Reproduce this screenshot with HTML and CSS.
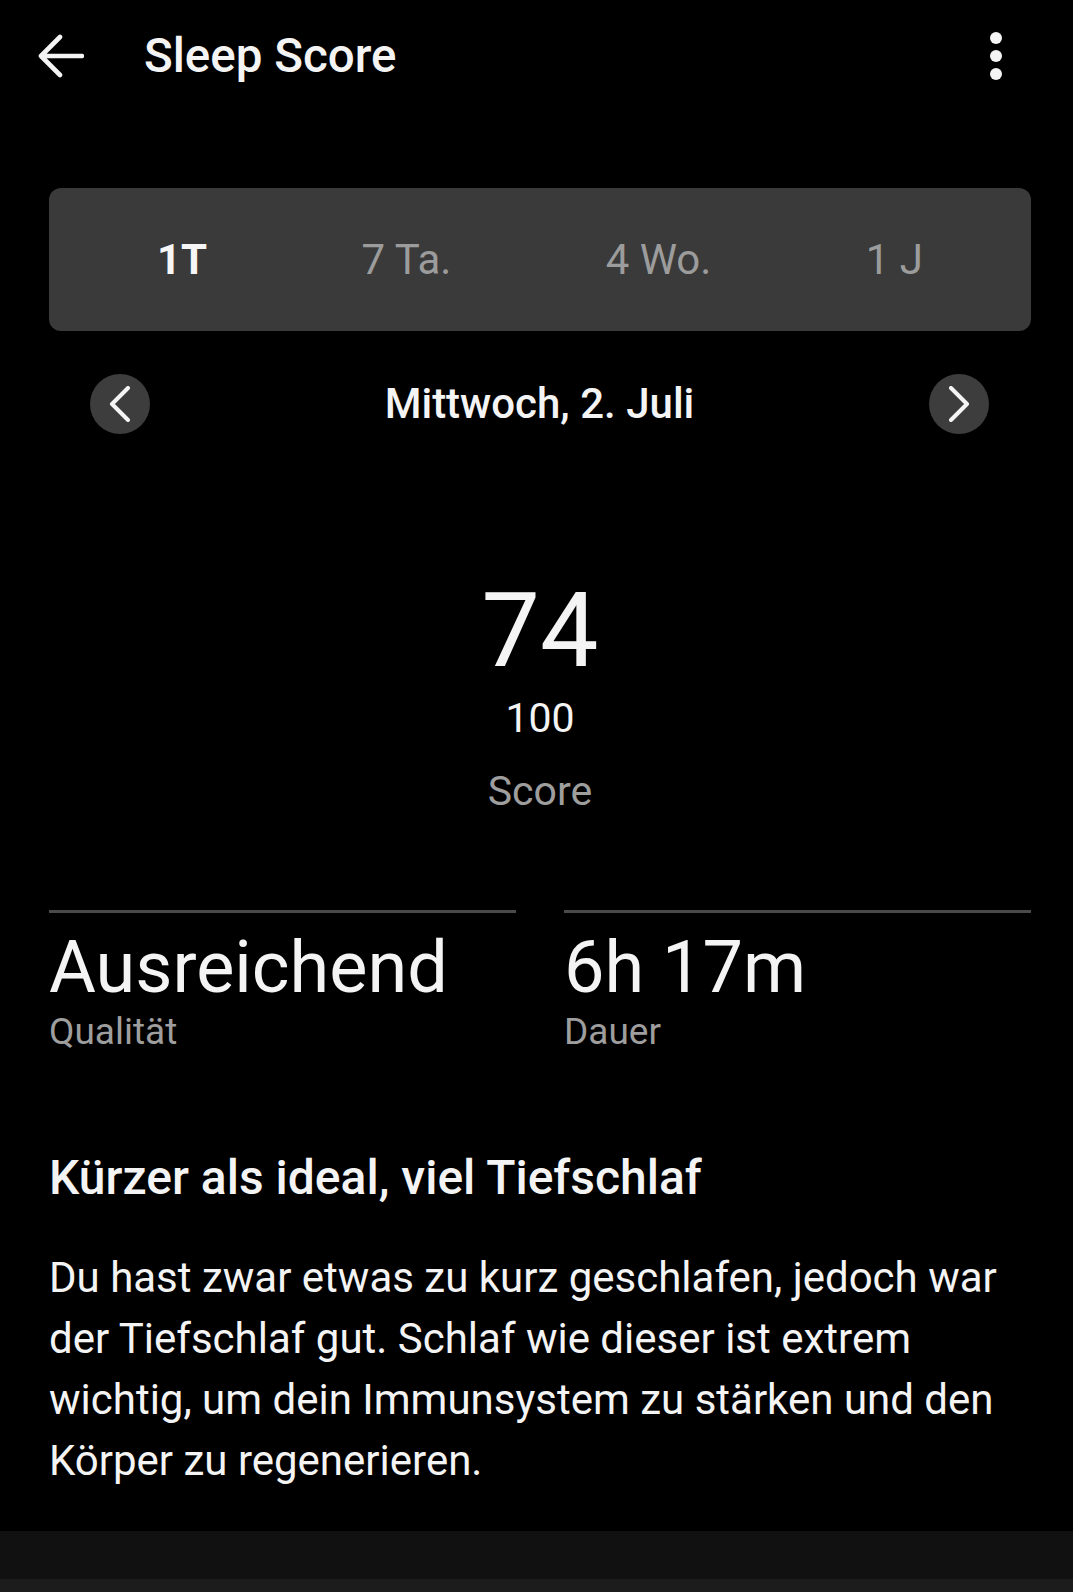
FILE: index.html
```html
<!DOCTYPE html>
<html lang="de">
<head>
<meta charset="utf-8">
<title>Sleep Score</title>
<link rel="stylesheet" href="styles.css">
</head>
<body>
<div class="screen">
  <header class="appbar">
    <span class="back" aria-label="Zurück">
      <svg width="48" height="46" viewBox="0 0 48 46"><path d="M46 23H5M24 4L5 23L24 42" fill="none" stroke="#f4f4f4" stroke-width="4.6" stroke-linecap="round" stroke-linejoin="round"/></svg>
    </span>
    <h1 class="title">Sleep Score</h1>
    <span class="kebab" aria-label="Menü"><i></i><i></i><i></i></span>
  </header>

  <main class="content">
    <nav class="tabs">
      <span class="tab active">1T</span>
      <span class="tab">7 Ta.</span>
      <span class="tab">4 Wo.</span>
      <span class="tab">1 J</span>
    </nav>

    <div class="daterow">
      <span class="navbtn">
        <svg width="22" height="36" viewBox="0 0 22 36"><path d="M19 2L3 18L19 34" fill="none" stroke="#f4f4f4" stroke-width="4" stroke-linecap="round" stroke-linejoin="round"/></svg>
      </span>
      <span class="date">Mittwoch, 2. Juli</span>
      <span class="navbtn">
        <svg width="22" height="36" viewBox="0 0 22 36"><path d="M3 2L19 18L3 34" fill="none" stroke="#f4f4f4" stroke-width="4" stroke-linecap="round" stroke-linejoin="round"/></svg>
      </span>
    </div>

    <section class="score">
      <div class="score-value">74</div>
      <div class="score-max">100</div>
      <div class="score-label">Score</div>
    </section>

    <section class="stats">
      <div class="stat">
        <div class="stat-value">Ausreichend</div>
        <div class="stat-label">Qualität</div>
      </div>
      <div class="stat">
        <div class="stat-value">6h 17m</div>
        <div class="stat-label">Dauer</div>
      </div>
    </section>

    <h2 class="insight-title">Kürzer als ideal, viel Tiefschlaf</h2>
    <p class="insight-text">Du hast zwar etwas zu kurz geschlafen, jedoch war der Tiefschlaf gut. Schlaf wie dieser ist extrem wichtig, um dein Immunsystem zu stärken und den Körper zu regenerieren.</p>
  </main>

  <footer class="bottombar"></footer>
  <div class="navstrip"></div>
</div>
</body>
</html>
```

FILE: styles.css
```css
* { box-sizing: border-box; }

html, body {
  margin: 0;
  padding: 0;
  background: #000;
}

body {
  font-family: Roboto, "Noto Sans", "Liberation Sans", sans-serif;
  color: #f4f4f4;
}

.screen {
  width: 1073px;
  height: 1592px;
  overflow: hidden;
  display: flex;
  flex-direction: column;
  background: #000;
}

/* App bar */
.appbar {
  height: 112px;
  display: flex;
  align-items: center;
  padding: 0 0 0 36px;
  flex-shrink: 0;
}

.back {
  width: 48px;
  height: 46px;
  display: flex;
}

.title {
  margin: 0 0 0 60px;
  font-size: 47.5px;
  font-weight: 500;
  line-height: 56px;
  flex: 1;
  color: #f4f4f4;
}

.kebab {
  width: 12px;
  margin-right: 71px;
  display: flex;
  flex-direction: column;
  gap: 6px;
}

.kebab i {
  display: block;
  width: 12px;
  height: 12px;
  border-radius: 50%;
  background: #f4f4f4;
}

/* Content column */
.content {
  padding: 0 42px 0 49px;
  flex: 1;
}

.tabs {
  margin-top: 76px;
  height: 143px;
  background: #3a3a3a;
  border-radius: 12px;
  padding: 0 108px;
  display: flex;
  justify-content: space-between;
  align-items: center;
}

.tab {
  font-size: 42px;
  line-height: 50px;
  color: #9c9c9c;
}

.tab.active {
  color: #f6f6f6;
  font-weight: 700;
}

.daterow {
  margin-top: 43px;
  height: 60px;
  padding: 0 42px 0 41px;
  display: flex;
  align-items: center;
  justify-content: space-between;
}

.navbtn {
  width: 60px;
  height: 60px;
  border-radius: 50%;
  background: #3d3d3d;
  display: flex;
  align-items: center;
  justify-content: center;
}

.date {
  font-size: 42px;
  font-weight: 500;
  line-height: 50px;
  color: #f4f4f4;
}

/* Score */
.score {
  margin-top: 142px;
  display: flex;
  flex-direction: column;
  align-items: center;
}

.score-value {
  font-size: 104px;
  line-height: 110px;
  font-weight: 400;
  color: #f4f4f4;
}

.score-max {
  margin-top: 8px;
  font-size: 41px;
  line-height: 48px;
  color: #f4f4f4;
}

.score-label {
  margin-top: 25px;
  font-size: 41px;
  line-height: 48px;
  color: #9e9e9e;
}

/* Stats */
.stats {
  margin-top: 95px;
  display: grid;
  grid-template-columns: 1fr 1fr;
  column-gap: 48px;
}

.stat {
  border-top: 3px solid #4a4a4a;
  padding-top: 15px;
}

.stat-value {
  font-size: 72px;
  line-height: 80px;
  color: #f4f4f4;
}

.stat-label {
  margin-top: 2px;
  font-size: 37px;
  line-height: 44px;
  color: #9e9e9e;
}

/* Insight */
.insight-title {
  margin: 96px 0 0;
  font-size: 48px;
  font-weight: 500;
  line-height: 56px;
  color: #f4f4f4;
}

.insight-text {
  margin: 41px 0 0;
  font-size: 42px;
  line-height: 61px;
  color: #f4f4f4;
}

.bottombar {
  height: 48px;
  background: #111;
  flex-shrink: 0;
}

.navstrip {
  height: 13px;
  background: #1c1c1c;
  flex-shrink: 0;
}
```
